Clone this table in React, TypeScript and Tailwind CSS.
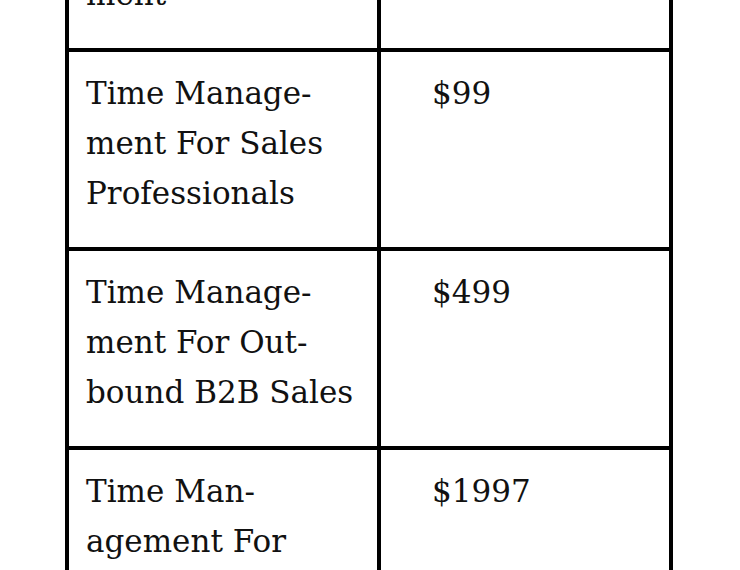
const rows = [
  { title: ["Introduction To", "Time Manage-", "ment"], price: "Free" },
  { title: ["Time Manage-", "ment For Sales", "Professionals"], price: "$99" },
  { title: ["Time Manage-", "ment For Out-", "bound B2B Sales"], price: "$499" },
  { title: ["Time Man-", "agement For", "Sales Leaders"], price: "$1997" },
];

export default function App() {
  return (
    <div className="h-[570px] w-[740px] overflow-hidden bg-white text-[#111] font-['DejaVu_Serif',serif]">
      <div className="-mt-[151px] ml-[65px] w-[608px] border-x-4 border-black">
        {rows.map((r, i) => (
          <div key={i} className="flex border-t-4 border-black">
            <div className="w-[312px] border-r-4 border-black pl-[17px] pt-[16px] pb-[29px] text-[31px] leading-[50px]">
              {r.title.map((line, j) => (
                <div key={j} className="whitespace-nowrap">
                  {line}
                </div>
              ))}
            </div>
            <div className="flex-1 pl-[51px] pt-[16px] text-[31px] leading-[50px]">{r.price}</div>
          </div>
        ))}
      </div>
    </div>
  );
}
